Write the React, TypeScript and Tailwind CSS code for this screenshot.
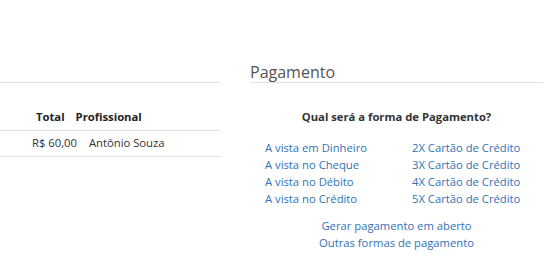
const linksLeft = [
  "A vista em Dinheiro",
  "A vista no Cheque",
  "A vista no Débito",
  "A vista no Crédito",
];

const linksRight = [
  "2X Cartão de Crédito",
  "3X Cartão de Crédito",
  "4X Cartão de Crédito",
  "5X Cartão de Crédito",
];

export default function App() {
  return (
    <div className="h-[269px] w-[553px] bg-white text-[11.25px] text-[#333] font-['Open_Sans',sans-serif] pt-[62px]">
      <div className="flex gap-[30px]">
        {/* Itens */}
        <div className="w-[220px]">
          <div className="h-[21px] border-b border-[#e2e2e2]"></div>
          <div className="mt-[22px]">
            <div className="flex h-[26px] items-center border-b border-[#e2e2e2] font-bold text-[#222]">
              <span className="ml-[36px]">Total</span>
              <span className="ml-[11px]">Profissional</span>
            </div>
            <div className="flex h-[26px] items-center border-b border-[#e2e2e2]">
              <span className="ml-[32px]">R$ 60,00</span>
              <span className="ml-[12px]">Antônio Souza</span>
            </div>
          </div>
        </div>

        {/* Pagamento */}
        <div className="w-[293px]">
          <h2 className="h-[21px] border-b border-[#e2e2e2] text-[16px] leading-[20px] text-[#555]">
            Pagamento
          </h2>
          <p className="mt-[25px] text-center font-bold leading-[17px] text-[#333]">
            Qual será a forma de Pagamento?
          </p>
          <div className="mt-[14px] flex pl-[15px]">
            <ul className="w-[147px] leading-[17px]">
              {linksLeft.map((l) => (
                <li key={l}>
                  <a className="text-[#3173b6]" href="#">{l}</a>
                </li>
              ))}
            </ul>
            <ul className="leading-[17px]">
              {linksRight.map((l) => (
                <li key={l}>
                  <a className="text-[#3173b6]" href="#">{l}</a>
                </li>
              ))}
            </ul>
          </div>
          <div className="mt-[10px] text-center leading-[17px]">
            <a className="block text-[#3173b6]" href="#">Gerar pagamento em aberto</a>
            <a className="block text-[#3173b6]" href="#">Outras formas de pagamento</a>
          </div>
        </div>
      </div>
    </div>
  );
}
